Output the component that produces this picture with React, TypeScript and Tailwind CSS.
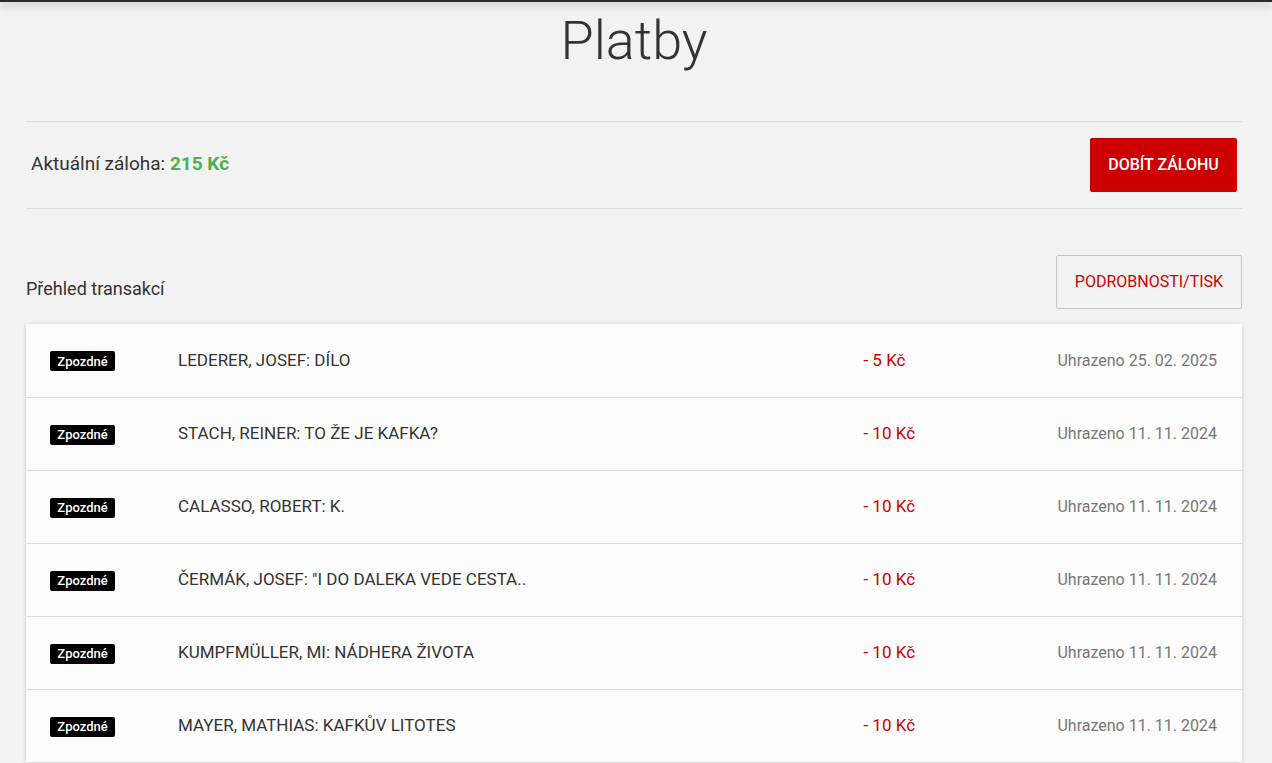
import React from 'react';

const rows = [
  { title: 'LEDERER, JOSEF: DÍLO', amount: '- 5 Kč', date: 'Uhrazeno 25. 02. 2025' },
  { title: 'STACH, REINER: TO ŽE JE KAFKA?', amount: '- 10 Kč', date: 'Uhrazeno 11. 11. 2024' },
  { title: 'CALASSO, ROBERT: K.', amount: '- 10 Kč', date: 'Uhrazeno 11. 11. 2024' },
  { title: 'ČERMÁK, JOSEF: "I DO DALEKA VEDE CESTA..', amount: '- 10 Kč', date: 'Uhrazeno 11. 11. 2024' },
  { title: 'KUMPFMÜLLER, MI: NÁDHERA ŽIVOTA', amount: '- 10 Kč', date: 'Uhrazeno 11. 11. 2024' },
  { title: 'MAYER, MATHIAS: KAFKŮV LITOTES', amount: '- 10 Kč', date: 'Uhrazeno 11. 11. 2024' },
];

const App = () => {
  return (
    <div className="min-h-[763px] bg-[#f2f2f2] font-['Roboto',sans-serif] text-[#333] overflow-hidden">
      {/* header edge with shadow */}
      <div className="h-[2px] bg-[#2a2a2a] shadow-[0_2px_8px_rgba(0,0,0,0.45)]" />

      <div className="w-[1216px] ml-[26px]">
        <h1 className="text-center text-[54px] font-light leading-none pt-[12px] text-[#333]">Platby</h1>

        <div className="mt-[53px] border-t border-b border-[#dcdcdc] h-[88px] flex items-center justify-between">
          <div className="pl-[5px] text-[19px] pb-[2px]">
            Aktuální záloha: <span className="font-bold text-[#4caf50]">215 Kč</span>
          </div>
          <button className="mr-[5px] h-[54px] w-[147px] bg-[#cc0000] text-white text-[16px] font-medium rounded-[2px]">
            DOBÍT ZÁLOHU
          </button>
        </div>

        <div className="mt-[46px] flex items-center justify-between">
          <div className="text-[18px] pt-[13px]">Přehled transakcí</div>
          <button className="h-[54px] w-[186px] border border-[#c4c4c4] rounded-[2px] text-[#cc0000] text-[16px]">
            PODROBNOSTI/TISK
          </button>
        </div>

        <div className="mt-[15px] bg-[#fcfcfc] shadow-[0_1px_4px_rgba(0,0,0,0.18)]">
          {rows.map((r, i) => (
            <div
              key={i}
              className={`h-[73px] flex items-center ${i > 0 ? 'border-t border-[#dedede]' : ''}`}
            >
              <div className="w-[152px] pl-[24px]">
                <span className="inline-flex items-center justify-center w-[65px] h-[20px] bg-black text-white text-[13px] font-medium rounded-[2px]">
                  Zpozdné
                </span>
              </div>
              <div className="flex-1 uppercase text-[17px] text-[#333]">{r.title}</div>
              <div className="w-[194px] text-[17px] text-[#cc0000]">{r.amount}</div>
              <div className="pr-[25px] text-[#777] text-[16px]">{r.date}</div>
            </div>
          ))}
        </div>
      </div>
    </div>
  );
};

export default App;
